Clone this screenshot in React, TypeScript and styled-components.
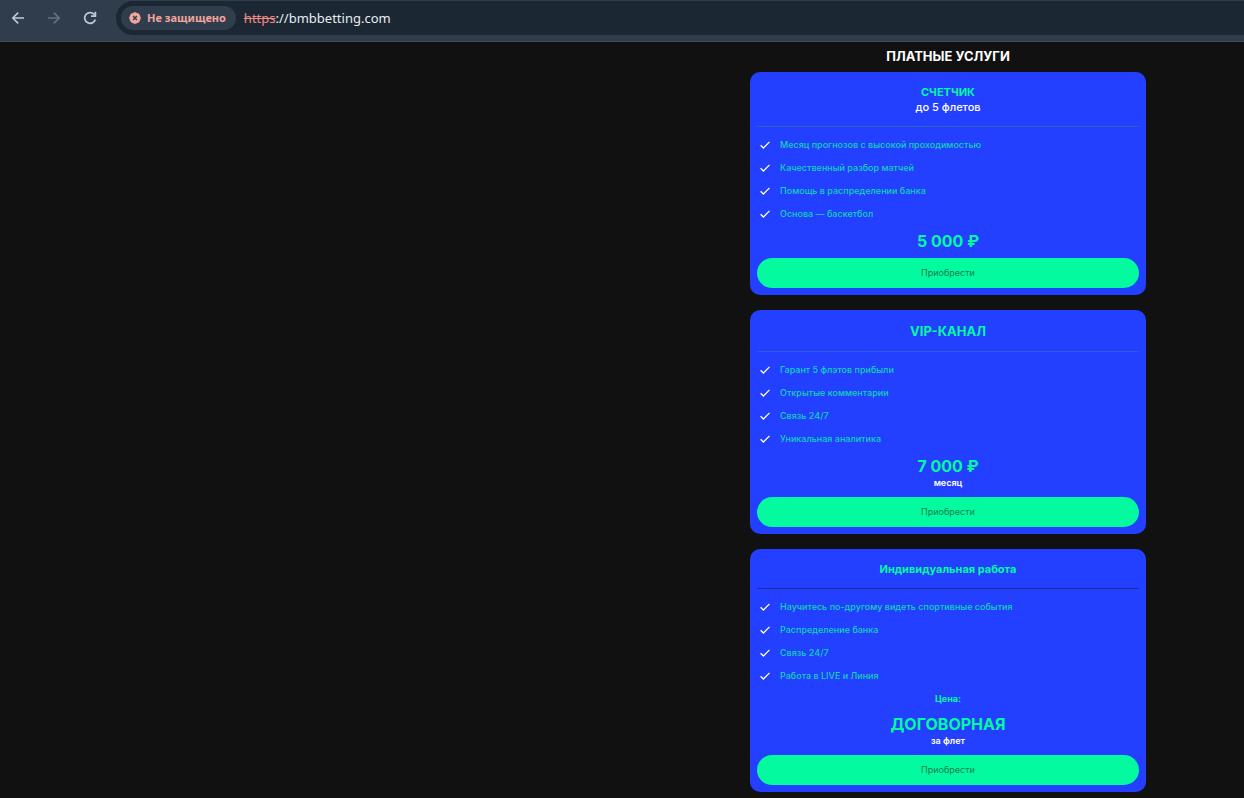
import React from "react";
import styled, { createGlobalStyle } from "styled-components";

const GlobalStyle = createGlobalStyle`
  * { box-sizing: border-box; }
  body {
    margin: 0;
    background: #111111;
    color: #ffffff;
    font-family: Inter, "Open Sans", sans-serif;
  }
`;

const Toolbar = styled.header`
  display: flex;
  align-items: flex-start;
  height: 42px;
  padding-top: 1px;
  background: #303d4c;
  border-bottom: 1px solid #434c55;
  font-family: "Noto Sans", "Open Sans", sans-serif;
`;

const NavButtons = styled.nav`
  display: flex;
  flex: none;
  width: 116px;
  height: 34px;
`;

const NavButton = styled.button`
  display: flex;
  align-items: center;
  justify-content: center;
  width: 36px;
  padding: 0;
  border: 0;
  background: none;
  color: #bccbdb;

  &:disabled { color: #66727f; }
`;

const AddressBar = styled.div`
  display: flex;
  flex: 1;
  align-items: center;
  gap: 8px;
  height: 34px;
  padding-left: 5px;
  border-radius: 17px 0 0 17px;
  background: #1b2733;
`;

const SecurityChip = styled.button`
  display: flex;
  align-items: center;
  gap: 6px;
  height: 24px;
  padding: 0 10px 0 8px;
  border: 0;
  border-radius: 12px;
  background: #303d4c;
  color: #f0a59d;
  font: 700 11px/24px "Noto Sans", "Open Sans", sans-serif;
  white-space: nowrap;
`;

const Url = styled.div`
  flex: 1;
  color: #e8edf2;
  font-size: 13px;
  line-height: 24px;
  outline: none;
`;

const Scheme = styled.s`
  color: #f28b82;
`;

const Page = styled.main`
  display: flex;
  justify-content: flex-end;
  padding: 4px 98px 6px 16px;
`;

const Services = styled.section`
  flex: 0 1 396px;
`;

const Heading = styled.h1`
  margin: 0 0 6px;
  font-size: 13px;
  font-weight: 700;
  line-height: 20px;
  text-align: center;
`;

const Plans = styled.div`
  display: flex;
  flex-direction: column;
  gap: 15px;
`;

const Card = styled.article`
  display: flex;
  flex-direction: column;
  padding: 7px;
  border-radius: 10px;
  background: #233fff;
  text-align: center;
`;

const CardHeader = styled.header<{ $rule: string }>`
  padding: 6px 0 11px;
  border-bottom: 1px solid ${(p) => p.$rule};
`;

const Title = styled.h2<{ $large?: boolean }>`
  margin: 0;
  color: #04fa9e;
  font-size: ${(p) => (p.$large ? 13 : 11)}px;
  font-weight: 700;
  line-height: ${(p) => (p.$large ? 17 : 15)}px;
`;

const Subtitle = styled.p`
  margin: 0;
  font-size: 11px;
  font-weight: 500;
  line-height: 15px;
`;

const Features = styled.ul`
  margin: 6px 0 0;
  padding: 0 3px;
  list-style: none;
`;

const Feature = styled.li`
  display: flex;
  align-items: center;
  gap: 10px;
  height: 23px;
  color: #0fd3b7;
  font-size: 9px;
  font-weight: 500;
  text-align: left;

  svg { flex: none; color: #ffffff; }
`;

const PriceLabel = styled.p`
  margin: 3px 0 0;
  color: #04fa9e;
  font-size: 9px;
  font-weight: 700;
  line-height: 18px;
`;

const Price = styled.p`
  margin: 6px 0 0;
  color: #04fa9e;
  font-size: 16px;
  font-weight: 700;
  line-height: 20px;
`;

const Note = styled.p`
  margin: 0;
  font-size: 9px;
  font-weight: 600;
  line-height: 14px;
`;

const BuyButton = styled.button`
  height: 30px;
  margin-top: 7px;
  padding: 0;
  border: 0;
  border-radius: 15px;
  background: #04fa9e;
  color: #0e7a55;
  font: 400 9px/28px Inter, "Open Sans", sans-serif;
`;

const BackIcon = () => (
  <svg width="14" height="14" viewBox="0 0 14 14" fill="none" stroke="currentColor" strokeWidth="1.6">
    <path d="M13 7H2M7.2 1.6 1.8 7l5.4 5.4" />
  </svg>
);

const ForwardIcon = () => (
  <svg width="14" height="14" viewBox="0 0 14 14" fill="none" stroke="currentColor" strokeWidth="1.6">
    <path d="M1 7h11M6.8 1.6 12.2 7l-5.4 5.4" />
  </svg>
);

const ReloadIcon = () => (
  <svg width="14" height="14" viewBox="0 0 14 14" fill="none" stroke="currentColor" strokeWidth="1.7">
    <path d="M12.3 8.4A5.4 5.4 0 1 1 11 3.2L12.4 4.6" />
    <path d="M12.4 0.8V5.2H8" />
  </svg>
);

const DangerIcon = () => (
  <svg width="12" height="12" viewBox="0 0 12 12">
    <circle cx="6" cy="6" r="5.5" fill="#f0a59d" />
    <path
      d="M6 0.4 7.6 1.4 9.9 2.1 10.6 4.4 11.6 6 10.6 7.6 9.9 9.9 7.6 10.6 6 11.6 4.4 10.6 2.1 9.9 1.4 7.6 0.4 6 1.4 4.4 2.1 2.1 4.4 1.4z"
      fill="#f0a59d"
      stroke="#f0a59d"
      strokeWidth="0.6"
      strokeLinejoin="round"
    />
    <path d="M4.1 4.1l3.8 3.8M7.9 4.1L4.1 7.9" stroke="#303d4c" strokeWidth="1.4" />
  </svg>
);

const CheckIcon = () => (
  <svg width="10" height="8" viewBox="0 0 10 8" fill="none" stroke="currentColor" strokeWidth="1.3">
    <path d="M0.6 4.2 3.4 7 9.5 0.9" />
  </svg>
);

interface Plan {
  title: string;
  large?: boolean;
  subtitle?: string;
  rule: string;
  features: string[];
  priceLabel?: string;
  price: string;
  note?: string;
}

const plans: Plan[] = [
  {
    title: "СЧЕТЧИК",
    subtitle: "до 5 флетов",
    rule: "#2d60b8",
    features: [
      "Месяц прогнозов с высокой проходимостью",
      "Качественный разбор матчей",
      "Помощь в распределении банка",
      "Основа — баскетбол",
    ],
    price: "5 000 ₽",
  },
  {
    title: "VIP-КАНАЛ",
    large: true,
    rule: "#3259d6",
    features: ["Гарант 5 флэтов прибыли", "Открытые комментарии", "Связь 24/7", "Уникальная аналитика"],
    price: "7 000 ₽",
    note: "месяц",
  },
  {
    title: "Индивидуальная работа",
    rule: "#1e2ea0",
    features: [
      "Научитесь по-другому видеть спортивные события",
      "Распределение банка",
      "Связь 24/7",
      "Работа в LIVE и Линия",
    ],
    priceLabel: "Цена:",
    price: "ДОГОВОРНАЯ",
    note: "за флет",
  },
];

export default function App() {
  return (
    <>
      <GlobalStyle />
      <Toolbar>
        <NavButtons>
          <NavButton aria-label="Назад"><BackIcon /></NavButton>
          <NavButton aria-label="Вперёд" disabled><ForwardIcon /></NavButton>
          <NavButton aria-label="Обновить"><ReloadIcon /></NavButton>
        </NavButtons>
        <AddressBar>
          <SecurityChip><DangerIcon />Не защищено</SecurityChip>
          <Url role="textbox" aria-label="Адрес" contentEditable suppressContentEditableWarning spellCheck={false}>
            <Scheme>https</Scheme>://bmbbetting.com
          </Url>
        </AddressBar>
      </Toolbar>
      <Page>
        <Services>
          <Heading>ПЛАТНЫЕ УСЛУГИ</Heading>
          <Plans>
            {plans.map((plan) => (
              <Card key={plan.title}>
                <CardHeader $rule={plan.rule}>
                  <Title $large={plan.large}>{plan.title}</Title>
                  {plan.subtitle && <Subtitle>{plan.subtitle}</Subtitle>}
                </CardHeader>
                <Features>
                  {plan.features.map((text) => (
                    <Feature key={text}><CheckIcon />{text}</Feature>
                  ))}
                </Features>
                {plan.priceLabel && <PriceLabel>{plan.priceLabel}</PriceLabel>}
                <Price>{plan.price}</Price>
                {plan.note && <Note>{plan.note}</Note>}
                <BuyButton>Приобрести</BuyButton>
              </Card>
            ))}
          </Plans>
        </Services>
      </Page>
    </>
  );
}
